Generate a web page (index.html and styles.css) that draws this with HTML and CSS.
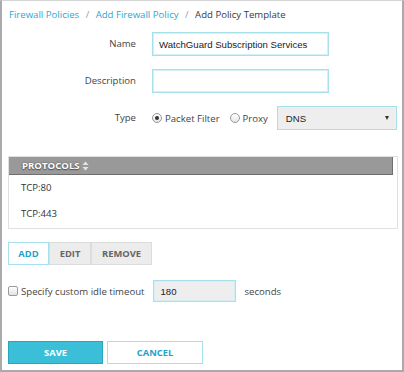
FILE: index.html
```html
<!DOCTYPE html>
<html lang="en">
<head>
    <meta charset="UTF-8">
    <meta name="viewport" content="width=device-width, initial-scale=1.0">
    <title>Add Policy Template</title>
    <link rel="stylesheet" href="styles.css">
</head>
<body>
    <div class="page">
        <div class="breadcrumb">
            <a href="#">Firewall Policies</a>
            <span class="sep">/</span>
            <a href="#">Add Firewall Policy</a>
            <span class="sep">/</span>
            <span class="current">Add Policy Template</span>
        </div>

        <div class="form">
            <label class="label">Name</label>
            <div class="field">
                <div class="input name-input">WatchGuard Subscription Services</div>
            </div>

            <label class="label">Description</label>
            <div class="field">
                <div class="input name-input"></div>
            </div>

            <label class="label">Type</label>
            <div class="field type-field">
                <span class="radio checked"></span>
                <span class="radio-text filter">Packet Filter</span>
                <span class="radio"></span>
                <span class="radio-text proxy">Proxy</span>
                <div class="select">
                    <span>DNS</span>
                    <span class="caret"></span>
                </div>
            </div>
        </div>

        <div class="table">
            <div class="table-head">
                <span class="head-title">PROTOCOLS</span>
                <svg class="sort" width="7" height="10" viewBox="0 0 7 10">
                    <path d="M0.5 4 L3.5 0.5 L6.5 4 Z" fill="#e4e4e4"/>
                    <path d="M0.5 6 L3.5 9.5 L6.5 6 Z" fill="#e4e4e4"/>
                </svg>
            </div>
            <div class="table-row">TCP:80</div>
            <div class="table-row">TCP:443</div>
        </div>

        <div class="btn-group">
            <button class="btn-small active">ADD</button>
            <button class="btn-small">EDIT</button>
            <button class="btn-small">REMOVE</button>
        </div>

        <div class="timeout">
            <span class="checkbox"></span>
            <span class="timeout-text">Specify custom idle timeout</span>
            <div class="input timeout-input">180</div>
            <span class="timeout-text">seconds</span>
        </div>

        <div class="actions">
            <button class="btn save">SAVE</button>
            <button class="btn cancel">CANCEL</button>
        </div>
    </div>
</body>
</html>
```

FILE: styles.css
```css
html, body {
    margin: 0;
    background: #fff;
}
body {
    font-family: 'Open Sans', 'Noto Sans', sans-serif;
    font-size: 9.6px;
    color: #444;
}
.page {
    box-sizing: border-box;
    width: 404px;
    height: 372px;
    border: 2px solid #aaa;
    border-top: 1px solid #d4d4d4;
    padding: 0 4px 0 6px;
}
.breadcrumb {
    margin-top: 7px;
    padding-left: 1px;
    line-height: 14px;
    color: #555;
}
.breadcrumb a {
    color: #2aa8d4;
    text-decoration: none;
}
.breadcrumb .sep {
    color: #999;
    margin: 0 4px;
}
.breadcrumb .current {
    color: #3a3a3a;
}
.form {
    display: grid;
    grid-template-columns: 128px 1fr;
    column-gap: 16px;
    row-gap: 13px;
    margin-top: 10px;
}
.label {
    display: flex;
    align-items: center;
    justify-content: flex-end;
    height: 24px;
    padding-bottom: 2px;
    box-sizing: border-box;
    color: #444;
}
.field {
    display: flex;
    align-items: center;
    height: 24px;
}
.input {
    box-sizing: border-box;
    height: 24px;
    border: 1px solid #a6e1eb;
    box-shadow: inset 0 0 0 1px #d2f0f5;
    font-family: 'Liberation Sans', Arial, sans-serif;
    font-size: 9.6px;
    color: #222;
    padding: 0 6px;
    display: flex;
    align-items: center;
}
.name-input {
    width: 177px;
    background: #fff;
}
.radio {
    flex-shrink: 0;
    box-sizing: border-box;
    width: 10px;
    height: 10px;
    border-radius: 50%;
    border: 1px solid #9a9a9a;
    background: linear-gradient(#fff, #e6e6e6);
    display: flex;
    align-items: center;
    justify-content: center;
    margin-right: 3px;
}
.radio.checked::after {
    content: '';
    width: 4px;
    height: 4px;
    border-radius: 50%;
    background: #333;
}
.radio-text {
    flex-shrink: 0;
    white-space: nowrap;
    color: #444;
}
.radio-text.filter {
    margin-right: 10px;
}
.radio-text.proxy {
    margin-right: 9px;
}
.select {
    flex-shrink: 0;
    box-sizing: border-box;
    width: 120px;
    height: 24px;
    border: 1px solid #a6e1eb;
    background: #eee;
    display: flex;
    align-items: center;
    justify-content: space-between;
    padding: 0 7px 0 8px;
    font-family: 'Liberation Sans', Arial, sans-serif;
    color: #222;
}
.caret {
    width: 0;
    height: 0;
    border-left: 2.5px solid transparent;
    border-right: 2.5px solid transparent;
    border-top: 4px solid #333;
}
.table {
    margin-top: 26px;
    border: 1px solid #e0e0e0;
    height: 73px;
    box-sizing: border-box;
}
.table-head {
    height: 17px;
    margin-right: 4px;
    background: #999;
    border-bottom: 1px solid #6f6f6f;
    border-right: 1px solid #6f6f6f;
    display: flex;
    align-items: center;
    padding-left: 13px;
}
.head-title {
    color: #fff;
    font-weight: bold;
    font-size: 9.6px;
    text-shadow: 0 0 2px #555, 0 1px 1px #555;
}
.sort {
    margin-left: 2px;
}
.table-row {
    height: 26px;
    line-height: 26px;
    padding-left: 12px;
    color: #333;
}
.btn-group {
    display: flex;
    margin-top: 13px;
}
.btn-small {
    box-sizing: border-box;
    height: 23px;
    border: 1px solid #dcdcdc;
    background: #ececec;
    color: #666;
    font-family: 'Open Sans', sans-serif;
    font-weight: bold;
    font-size: 9.4px;
    padding: 0;
    margin: 0;
}
.btn-small:nth-child(1) { width: 41px; }
.btn-small:nth-child(2) { width: 42px; }
.btn-small:nth-child(3) { width: 61px; }
.btn-small.active {
    background: #fff;
    border-color: #a6e1eb;
    color: #1fa3c8;
}
.timeout {
    display: flex;
    align-items: center;
    margin-top: 15px;
    height: 22px;
}
.checkbox {
    box-sizing: border-box;
    width: 10px;
    height: 10px;
    border: 1px solid #9a9a9a;
    border-radius: 2px;
    background: linear-gradient(#fff, #e2e2e2);
    margin-right: 3px;
}
.timeout-text {
    color: #444;
}
.timeout-input {
    width: 83px;
    height: 22px;
    background: #eee;
    margin: 0 8px 0 9px;
}
.actions {
    display: flex;
    gap: 4px;
    margin-top: 39px;
}
.btn {
    box-sizing: border-box;
    height: 23px;
    font-family: 'Open Sans', sans-serif;
    font-weight: bold;
    font-size: 9.4px;
    padding: 0;
}
.save {
    width: 95px;
    background: #3bbfd8;
    border: 1px solid #2ba5bf;
    color: #fff;
}
.cancel {
    width: 96px;
    background: #fff;
    border: 1px solid #a6e1eb;
    color: #1fa3c8;
}
```
